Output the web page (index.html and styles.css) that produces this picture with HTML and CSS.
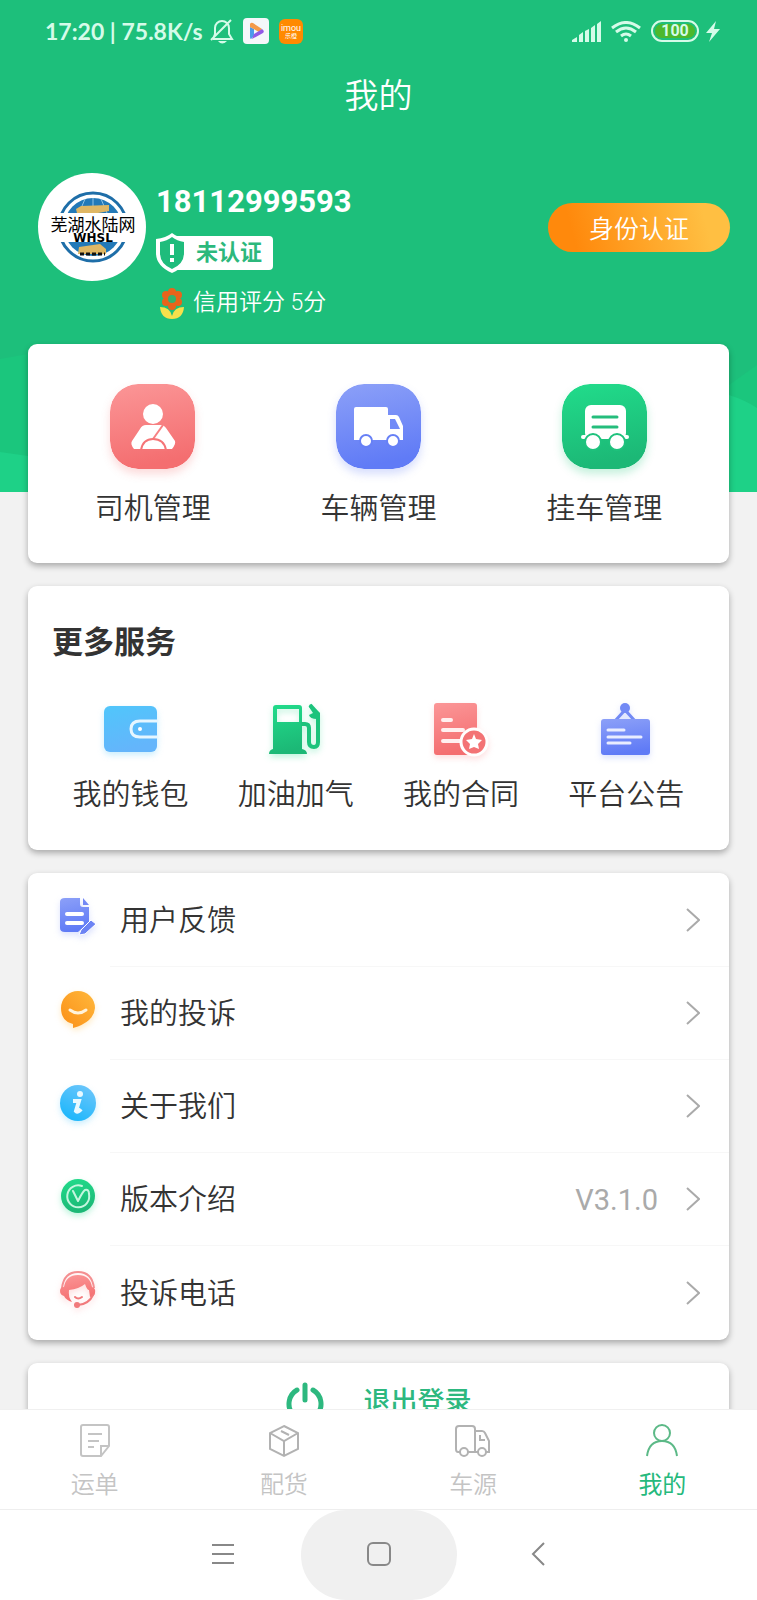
FILE: index.html
```html
<!DOCTYPE html>
<html lang="zh-CN">
<head>
    <meta charset="UTF-8">
    <meta name="viewport" content="width=device-width, initial-scale=1.0">
    <title>我的</title>
    <link rel="stylesheet" href="styles.css">
</head>
<body>
    <div class="app">
        <main class="content">
            <header class="header">
                <svg class="header-waves" viewBox="0 0 757 152" preserveAspectRatio="none" aria-hidden="true">
                    <path fill="#1bc67d" d="M0 19L28 14L400 60L729 45L757 25V152H0z"/>
                    <path fill="#1ed187" d="M0 112L28 116L400 140L700 46L729 55Q745 60 757 68V152H0z"/>
                </svg>
                <div class="status-bar">
                    <span class="status-text">17:20 | 75.8K/s</span>
                    <svg class="bell" width="24" height="26" viewBox="0 0 24 26" fill="none" stroke="#d5fbe9" stroke-width="2">
                        <path d="M3 21H22L19 16V10A7 7 0 0 0 5 10V16L3 21M1 22L21 2"/>
                        <path fill="#d5fbe9" stroke="none" d="M8 23H17Q12 28 8 23z"/>
                    </svg>
                    <svg width="26" height="26" viewBox="0 0 26 26">
                        <rect width="26" height="26" rx="4" fill="#f4f7fa"/>
                        <path fill="#4b9bea" d="M7 9L11 11V18L8 21Q7 21 7 19z"/>
                        <path fill="#f39a4a" d="M7 6Q8 4 10 5L19 11L16 14L7 9z"/>
                        <path fill="#9259e6" d="M19 11Q22 13 20 15L9 21L11 16L16 13z"/>
                    </svg>
                    <svg class="imou" width="24" height="25" viewBox="0 0 24 25">
                        <rect width="24" height="25" rx="6" fill="#ff8a00"/>
                        <text x="12" y="12" text-anchor="middle" font-size="9">imou</text>
                        <text x="12" y="19" text-anchor="middle" font-size="6">乐橙</text>
                    </svg>
                    <div class="status-right">
                        <svg width="29" height="21" viewBox="0 0 29 21" fill="#d5fbe9">
                            <path d="M0 21V19L5 16V21zM7 21V14L11 11V21zM13 21V10L17 8V21zM19 21V7L23 4V21zM25 21V3L29 0V21z"/>
                        </svg>
                        <svg width="30" height="21" viewBox="0 0 30 21" fill="none" stroke="#d5fbe9" stroke-width="3">
                            <path d="M1 7Q15 -4 29 7M5 11Q15 3 25 11M10 15Q15 11 20 15"/>
                            <circle cx="15" cy="19" r="2" fill="#d5fbe9" stroke="none"/>
                        </svg>
                        <span class="battery">100</span>
                        <svg width="14" height="21" viewBox="0 0 14 21"><path fill="#d5fbe9" d="M10 0L0 12H6L3 21L14 8H8z"/></svg>
                    </div>
                </div>
                <h1 class="title">我的</h1>
                <div class="profile">
                    <svg class="avatar" viewBox="0 0 108 108" role="img" aria-label="芜湖水陆网">
                        <circle cx="54" cy="54" r="54" fill="#fff"/>
                        <circle cx="55" cy="54" r="34" fill="none" stroke="#1e6ea8" stroke-width="3"/>
                        <circle cx="55" cy="54" r="29" fill="#2279b8"/>
                        <path fill="none" stroke="#8fc4e6" d="M55 25V40M47 26L41 40M63 26L69 40"/>
                        <path fill="#dfb765" d="M38 36L43 33L71 32V38L60 40H39z"/>
                        <rect x="15" y="40" width="78" height="29" fill="#fff"/>
                        <path fill="#dfb765" d="M41 74L62 71L68 76V81H40z"/>
                        <path fill="none" stroke="#111" stroke-width="3" stroke-dasharray="4 2" d="M42 81H67"/>
                        <text x="55" y="58" text-anchor="middle" font-size="17">芜湖水陆网</text>
                        <text class="avatar-latin" x="55" y="69" text-anchor="middle" font-size="12">WHSL</text>
                    </svg>
                    <div class="profile-info">
                        <div class="phone">18112999593</div>
                        <div class="badge">
                            <svg width="32" height="40" viewBox="0 0 32 40">
                                <path fill="#fff" d="M16 0Q22 5 32 6V20Q32 33 16 40Q0 33 0 20V6Q10 5 16 0z"/>
                                <path fill="#1fbc7c" d="M16 4Q21 8 28 9V20Q28 31 16 36Q4 31 4 20V9Q11 8 16 4z"/>
                                <path stroke="#fff" stroke-width="4" d="M16 11V22M16 25V29"/>
                            </svg>
                            <span>未认证</span>
                        </div>
                        <div class="credit">
                            <svg width="24" height="32" viewBox="0 0 24 32">
                                <g fill="#e8641b">
                                    <circle cx="12" cy="5" r="4"/><circle cx="6" cy="8" r="4"/><circle cx="18" cy="8" r="4"/>
                                    <circle cx="6" cy="15" r="4"/><circle cx="18" cy="15" r="4"/><circle cx="12" cy="19" r="4"/>
                                    <circle cx="12" cy="12" r="7"/>
                                </g>
                                <circle cx="12" cy="12" r="4" fill="#35b26d"/>
                                <path fill="#f6e04b" d="M0 20Q10 20 12 29Q14 20 24 20Q23 32 12 32Q1 32 0 20z"/>
                            </svg>
                            <span>信用评分 5分</span>
                        </div>
                    </div>
                    <button type="button" class="verify">身份认证</button>
                </div>
            </header>

            <div class="cards">
                <section class="card manage">
                    <a href="#driver">
                        <svg class="tile tile-red" viewBox="0 0 85 85">
                            <defs><linearGradient id="red" x1="0" y1="0" x2="0.2" y2="1"><stop stop-color="#fb9697"/><stop offset="1" stop-color="#f46e70"/></linearGradient></defs>
                            <rect width="85" height="85" rx="28" fill="url(#red)"/>
                            <circle cx="43" cy="30" r="10" fill="#fff"/>
                            <path fill="#fff" d="M36 41H50Q54 41 56 44L65 57Q66 60 62 65H24Q20 60 22 57L30 45Q32 41 36 41z"/>
                            <path stroke="#f78183" stroke-width="2" d="M53 41L43 55"/>
                            <path fill="#fff" stroke="#f57577" stroke-width="2" d="M31 66Q33 55 43 55Q54 55 56 66z"/>
                        </svg>
                        <span>司机管理</span>
                    </a>
                    <a href="#vehicle">
                        <svg class="tile tile-blue" viewBox="0 0 85 85">
                            <defs><linearGradient id="blue" x1="0" y1="0" x2="0.2" y2="1"><stop stop-color="#8ca0f8"/><stop offset="1" stop-color="#607bf6"/></linearGradient></defs>
                            <rect width="85" height="85" rx="28" fill="url(#blue)"/>
                            <path fill="#fff" d="M20 23H50Q52 23 52 25V31H60Q62 31 63 33L67 42V56H18V25Q18 23 20 23z"/>
                            <path fill="#728bf7" d="M54 35H59L64 45H54z"/>
                            <g fill="#fff" stroke="#6780f6" stroke-width="2"><circle cx="30" cy="57" r="6"/><circle cx="57" cy="57" r="6"/></g>
                        </svg>
                        <span>车辆管理</span>
                    </a>
                    <a href="#trailer">
                        <svg class="tile tile-green" viewBox="0 0 85 85">
                            <defs><linearGradient id="green" x1="0" y1="0" x2="0.2" y2="1"><stop stop-color="#21dc8b"/><stop offset="1" stop-color="#1cb876"/></linearGradient></defs>
                            <rect width="85" height="85" rx="28" fill="url(#green)"/>
                            <rect x="23" y="21" width="41" height="34" rx="6" fill="#fff"/>
                            <path stroke="#fff" stroke-width="4" stroke-linecap="round" d="M21 53H65"/>
                            <path stroke="#25bd7c" stroke-width="3" stroke-linecap="round" d="M31 33H55M31 43H55"/>
                            <g fill="#fff" stroke="#1fc27d" stroke-width="2"><circle cx="31" cy="58" r="8"/><circle cx="55" cy="58" r="8"/></g>
                        </svg>
                        <span>挂车管理</span>
                    </a>
                </section>

                <section class="card services">
                    <h2>更多服务</h2>
                    <div class="service-list">
                        <a href="#wallet">
                            <svg class="glow-sky" width="60" height="60" viewBox="0 0 60 60">
                                <defs><linearGradient id="sky" x1="0" y1="0" x2="0.3" y2="1"><stop stop-color="#50c6fb"/><stop offset="1" stop-color="#64b5fb"/></linearGradient></defs>
                                <rect x="3" y="7" width="53" height="46" rx="6" fill="url(#sky)"/>
                                <path fill="none" stroke="#e6f6ff" stroke-width="3" d="M57 22H39Q30 22 30 30Q30 38 39 38H57"/>
                                <circle cx="39" cy="30" r="2" fill="#fff"/>
                            </svg>
                            <span>我的钱包</span>
                        </a>
                        <a href="#fuel">
                            <svg class="glow-green" width="60" height="60" viewBox="0 0 60 60">
                                <path fill="url(#green)" fill-rule="evenodd" d="M10 6H33Q36 6 36 9V50Q41 51 41 55H3Q3 51 7 50V9Q7 6 10 6zM11 10V23H33V10z"/>
                                <path fill="none" stroke="#1cc37c" stroke-width="4" stroke-linejoin="round" d="M35 25H39Q43 25 43 29V43Q43 48 48 48Q52 48 52 43V15L44 6"/>
                                <path fill="#1cc37c" d="M44 5L54 14V22L51 20Q44 20 43 16L47 14L43 8z"/>
                            </svg>
                            <span>加油加气</span>
                        </a>
                        <a href="#contract">
                            <svg class="glow-red" width="60" height="60" viewBox="0 0 60 60">
                                <rect x="3" y="4" width="43" height="52" rx="3" fill="url(#red)"/>
                                <path stroke="#fff0f0" stroke-width="4" stroke-linecap="round" d="M12 21H20M12 31H32M12 42H29"/>
                                <circle cx="43" cy="43" r="13" fill="#f37375" stroke="#fff" stroke-width="3"/>
                                <path fill="#fff" d="M43 35L45 40L51 41L47 45L48 50L43 48L38 50L39 45L35 41L41 40z"/>
                            </svg>
                            <span>我的合同</span>
                        </a>
                        <a href="#notice">
                            <svg class="glow-blue" width="60" height="60" viewBox="0 0 60 60">
                                <path fill="#e2e8fe" stroke="#728af5" stroke-width="3" d="M29 11L19 22H39z"/>
                                <circle cx="29" cy="9" r="5" fill="#728af5"/>
                                <rect x="5" y="20" width="49" height="36" rx="3" fill="url(#blue)"/>
                                <path stroke="#e9edff" stroke-width="3" stroke-linecap="round" d="M12 31H28M12 38H45M12 44H34"/>
                            </svg>
                            <span>平台公告</span>
                        </a>
                    </div>
                </section>

                <section class="card menu">
                    <a href="#feedback">
                        <svg class="menu-icon glow-blue" viewBox="0 0 40 48">
                            <path fill="url(#blue)" d="M7 1H22V7Q22 10 25 10H31V25L20 35H7Q2 35 2 31V5Q2 1 7 1z"/>
                            <path fill="#7288f5" d="M25 1L31 8H25z"/>
                            <path stroke="#fff" stroke-width="4" stroke-linecap="round" d="M9 17H24M9 26H24"/>
                            <path fill="#6c83f4" stroke="#fff" d="M33 23L38 27L27 37L21 38L23 33z"/>
                        </svg>
                        <span class="menu-body"><span class="menu-label">用户反馈</span><svg class="chevron" viewBox="0 0 14 24"><path d="M1 1L13 12L1 23"/></svg></span>
                    </a>
                    <a href="#complaint">
                        <svg class="menu-icon glow-orange" viewBox="0 0 40 48">
                            <defs><linearGradient id="orange" x1="1" y1="0" x2="0" y2="1"><stop stop-color="#ffb83c"/><stop offset="1" stop-color="#fb8f17"/></linearGradient></defs>
                            <path fill="url(#orange)" d="M20 1A17 17 0 0 1 37 18Q36 32 15 38V34Q3 31 3 18A17 17 0 0 1 20 1z"/>
                            <path fill="none" stroke="#fff3dc" stroke-width="3" stroke-linecap="round" d="M12 20Q20 26 28 20"/>
                        </svg>
                        <span class="menu-body"><span class="menu-label">我的投诉</span><svg class="chevron" viewBox="0 0 14 24"><path d="M1 1L13 12L1 23"/></svg></span>
                    </a>
                    <a href="#about">
                        <svg class="menu-icon glow-sky" viewBox="0 0 40 48">
                            <defs><linearGradient id="info" x1="0.7" y1="0" x2="0.2" y2="1"><stop stop-color="#69c5fb"/><stop offset="1" stop-color="#18b6fb"/></linearGradient></defs>
                            <circle cx="20" cy="20" r="18" fill="url(#info)"/>
                            <circle cx="22" cy="11" r="3" fill="#e9f9ff"/>
                            <path fill="none" stroke="#e9f9ff" stroke-width="4" d="M15 18H21L18 28Q20 30 23 26"/>
                        </svg>
                        <span class="menu-body"><span class="menu-label">关于我们</span><svg class="chevron" viewBox="0 0 14 24"><path d="M1 1L13 12L1 23"/></svg></span>
                    </a>
                    <a href="#version">
                        <svg class="menu-icon glow-green" viewBox="0 0 40 48">
                            <circle cx="20" cy="20" r="17" fill="url(#green)"/>
                            <path fill="none" stroke="#c5f6df" stroke-width="2" stroke-linecap="round" stroke-linejoin="round" d="M24 10A11 11 0 1 0 31 18Q31 13 27 14Q25 15 20 25L15 15"/>
                        </svg>
                        <span class="menu-body"><span class="menu-label">版本介绍</span><em class="version">V3.1.0</em><svg class="chevron" viewBox="0 0 14 24"><path d="M1 1L13 12L1 23"/></svg></span>
                    </a>
                    <a href="tel:">
                        <svg class="menu-icon glow-red" viewBox="0 0 40 48">
                            <path fill="none" stroke="#f48f91" stroke-width="2" d="M4 19Q6 3 20 3Q34 3 36 19"/>
                            <path fill="url(#red)" d="M6 18Q8 6 20 6Q32 6 34 18Q38 19 37 24Q37 27 32 28L31 21Q29 21 27 15Q21 20 11 21Q10 28 14 33Q8 31 6 27Q2 26 2 22Q2 18 6 18z"/>
                            <path fill="none" stroke="#f17a7c" stroke-width="2" stroke-linecap="round" d="M17 28Q20 31 24 28M35 26Q31 35 20 36"/>
                            <circle cx="19" cy="36" r="3" fill="#f17a7c"/>
                        </svg>
                        <span class="menu-body"><span class="menu-label">投诉电话</span><svg class="chevron" viewBox="0 0 14 24"><path d="M1 1L13 12L1 23"/></svg></span>
                    </a>
                </section>

                <button type="button" class="card logout">
                    <svg width="38" height="40" viewBox="0 0 38 40" fill="none" stroke="#2db87f" stroke-width="5" stroke-linecap="round">
                        <path d="M19 3V18M11 8A16 16 0 1 0 27 8"/>
                    </svg>
                    <span>退出登录</span>
                </button>
            </div>
        </main>

        <nav class="tabs">
            <a href="#waybill">
                <svg viewBox="0 0 40 36"><path d="M8 2H32Q34 2 34 4V23L26 33H8Q6 33 6 31V4Q6 2 8 2zM26 33V23H34M13 11H27M13 18H24M13 24H19"/></svg>
                <span>运单</span>
            </a>
            <a href="#cargo">
                <svg class="dark" viewBox="0 0 40 36"><path d="M20 3L34 10V26L20 33L6 26V10zM6 10L20 18L34 10M20 18V33M17 8L25 12"/></svg>
                <span>配货</span>
            </a>
            <a href="#source">
                <svg class="dark" viewBox="0 0 40 36"><path d="M7 29H5Q3 29 3 26V6Q3 3 6 3H19Q22 3 22 6V29M15 29H25M22 8H29Q31 8 32 10L36 18V29H33M27 12V17H32"/><circle cx="11" cy="29" r="4"/><circle cx="29" cy="29" r="4"/></svg>
                <span>车源</span>
            </a>
            <a href="#mine" class="active">
                <svg viewBox="0 0 40 36"><circle cx="20" cy="10" r="8"/><path d="M5 33Q7 18 20 18Q33 18 35 33"/></svg>
                <span>我的</span>
            </a>
        </nav>

        <div class="system-nav">
            <button type="button" aria-label="菜单"><svg viewBox="0 0 24 24"><path d="M1 3H23M1 12H23M1 21H23"/></svg></button>
            <button type="button" class="pressed" aria-label="主页"><svg viewBox="0 0 24 24"><rect x="1" y="1" width="22" height="22" rx="5"/></svg></button>
            <button type="button" aria-label="返回"><svg viewBox="0 0 24 24"><path d="M21 1L10 12L21 23"/></svg></button>
        </div>
    </div>
</body>
</html>
```
FILE: styles.css
```css
* {
    box-sizing: border-box;
}
body {
    margin: 0;
    background-color: #f2f2f2;
    color: #333;
    font-family: Roboto, 'Noto Sans CJK SC', sans-serif;
    font-size: 29px;
    line-height: 40px;
}
a {
    color: inherit;
    text-decoration: none;
}
button {
    border: none;
    padding: 0;
    font-family: inherit;
    cursor: pointer;
}
svg {
    flex-shrink: 0;
}
.app {
    display: flex;
    flex-direction: column;
    height: 100vh;
}
.content {
    flex: 1;
    min-height: 0;
    overflow: hidden;
}

/* header */
.header {
    position: relative;
    background-color: #1dbf7b;
    color: #fff;
    padding-bottom: 171px;
}
.header-waves {
    position: absolute;
    left: 0;
    bottom: 0;
    width: 100%;
    height: 152px;
}
.status-bar {
    display: flex;
    align-items: center;
    height: 62px;
    padding: 0 37px 0 45px;
    color: #d5fbe9;
}
.status-text {
    font-family: Lato, sans-serif;
    font-size: 23px;
    font-weight: bold;
}
.bell {
    margin: 0 9px 0 7px;
}
.imou {
    margin-left: 10px;
    fill: #fff;
}
.status-right {
    display: flex;
    align-items: center;
    gap: 10px;
    margin-left: auto;
}
.battery {
    border: 2px solid #d5fbe9;
    border-radius: 11px;
    width: 48px;
    height: 22px;
    margin-right: -3px;
    line-height: 18px;
    font-size: 16px;
    font-weight: bold;
    text-align: center;
    background-color: #4cb82c;
    box-shadow: inset 0 0 0 2px #1dbf7b;
}
.title {
    margin: 0;
    padding: 9px 0 8px;
    font-size: 34px;
    line-height: 50px;
    font-weight: 350;
    text-align: center;
}
.profile {
    display: flex;
    align-items: center;
    padding: 44px 27px 0 38px;
}
.avatar {
    width: 108px;
    height: 108px;
    margin-bottom: 40px;
}
.avatar-latin {
    font-family: 'DejaVu Sans', sans-serif;
    font-weight: bold;
}
.profile-info {
    flex: 1;
    margin-left: 10px;
}
.phone {
    font-size: 31px;
    line-height: 36px;
    margin-top: 10px;
    font-weight: bold;
}
.badge {
    display: flex;
    align-items: center;
    margin-top: 13px;
}
.badge span {
    margin-left: -16px;
    padding: 0 11px 0 24px;
    border-radius: 4px;
    background-color: #fff;
    color: #2cb87c;
    font-size: 22px;
    line-height: 34px;
    font-weight: bold;
}
.badge svg {
    z-index: 1;
}
.credit {
    display: flex;
    align-items: center;
    gap: 9px;
    margin: 14px 0 2px 4px;
    font-size: 23px;
    line-height: 32px;
    font-weight: 350;
}
.verify {
    width: 182px;
    height: 49px;
    margin-bottom: 40px;
    border-radius: 25px;
    background: linear-gradient(75deg, #ff890c 15%, #ffbf42 85%);
    color: #fff;
    font-size: 25px;
    font-weight: 350;
}

/* cards */
.cards {
    position: relative;
    display: flex;
    flex-direction: column;
    gap: 23px;
    margin-top: -148px;
    padding: 0 28px 23px;
}
.card {
    border-radius: 9px;
    background-color: #fff;
    box-shadow: 0 3px 6px rgba(0, 0, 0, 0.3);
}
.manage a, .service-list a {
    flex: 1;
    display: flex;
    flex-direction: column;
    align-items: center;
    font-weight: 350;
}
.manage {
    display: flex;
    padding: 40px 12px 34px;
}
.tile {
    width: 85px;
    height: 85px;
    margin-bottom: 20px;
    border-radius: 28px;
}
.tile-red {
    box-shadow: 0 5px 8px rgba(244, 110, 112, 0.25);
}
.tile-blue {
    box-shadow: 0 5px 8px rgba(96, 123, 246, 0.25);
}
.tile-green {
    box-shadow: 0 5px 8px rgba(28, 200, 120, 0.25);
}
.services {
    padding: 37px 20px 35px;
}
.services h2 {
    margin: 0 0 36px 4px;
    font-size: 31px;
    line-height: 40px;
}
.service-list {
    display: flex;
}
.service-list svg {
    margin-bottom: 16px;
}
.glow-sky {
    filter: drop-shadow(0 3px 3px rgba(80, 198, 251, 0.3));
}
.glow-green {
    filter: drop-shadow(0 3px 3px rgba(33, 220, 139, 0.3));
}
.glow-red {
    filter: drop-shadow(0 3px 3px rgba(251, 150, 151, 0.3));
}
.glow-blue {
    filter: drop-shadow(0 3px 3px rgba(140, 160, 248, 0.3));
}
.glow-orange {
    filter: drop-shadow(0 3px 3px rgba(255, 184, 60, 0.3));
}

/* menu */
.menu {
    padding: 1px 0;
}
.menu a {
    display: flex;
    align-items: center;
    padding-left: 30px;
}
.menu-icon {
    width: 40px;
    height: 48px;
}
.menu-body {
    flex: 1;
    display: flex;
    align-items: center;
    height: 93px;
    margin-left: 12px;
    padding: 0 29px 0 10px;
    border-bottom: 1px solid #f7f7f7;
}
.menu a:last-child .menu-body {
    border-bottom: none;
}
.menu-label {
    padding-top: 2px;
    font-weight: 350;
}
.version {
    margin-left: auto;
    padding-top: 2px;
    color: #aaa;
    font-style: normal;
}
.chevron {
    width: 14px;
    height: 24px;
    margin-left: auto;
    fill: none;
    stroke: #aaa;
    stroke-width: 2;
}
.version + .chevron {
    margin-left: 28px;
}
.logout {
    display: flex;
    justify-content: center;
    align-items: center;
    gap: 40px;
    padding: 19px 0;
    color: #2db87f;
    font-size: 27px;
    line-height: 40px;
    font-weight: 500;
}

/* bottom bars */
.tabs {
    display: flex;
    border-top: 1px solid #f0f0f0;
    background-color: #fff;
    color: #c4c4c4;
    font-size: 24px;
    line-height: 36px;
}
.tabs a {
    flex: 1;
    display: flex;
    flex-direction: column;
    align-items: center;
    gap: 8px;
    padding: 13px 0 6px;
    font-weight: 350;
}
.tabs svg {
    width: 40px;
    height: 36px;
    fill: none;
    stroke: #c4c4c4;
    stroke-width: 2;
}
.tabs .dark {
    stroke: #b2b2b2;
}
.tabs .active {
    color: #25b97c;
    font-weight: 400;
}
.tabs .active svg {
    stroke: #5cb987;
}
.system-nav {
    display: flex;
    justify-content: center;
    border-top: 1px solid #eee;
    background-color: #fff;
}
.system-nav button {
    width: 156px;
    height: 90px;
    border-radius: 45px;
    background-color: transparent;
}
.system-nav .pressed {
    background-color: #f0f0f0;
}
.system-nav svg {
    width: 24px;
    height: 24px;
    fill: none;
    stroke: #888;
    stroke-width: 2;
}
```
